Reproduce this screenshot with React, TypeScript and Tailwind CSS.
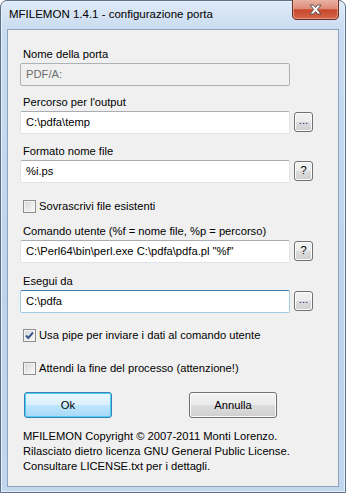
import React from "react";

function SmallBtn({ label }: { label: string }) {
  return (
    <div className="mt-[1px] flex h-[20px] w-[19px] items-center justify-center rounded-[3px] border border-[#707070] bg-[linear-gradient(180deg,#f2f2f2_0%,#ebebeb_50%,#dddddd_50%,#cfcfcf_100%)] text-[11.2px] leading-none text-black shadow-[inset_0_0_0_1px_#fcfcfc]">
      <span className={label === "?" ? "" : "-mt-[3px] text-[#1a1a6e]"}>{label}</span>
    </div>
  );
}

function TextBox({
  value,
  disabled,
  focused,
}: {
  value: string;
  disabled?: boolean;
  focused?: boolean;
}) {
  const cls = disabled
    ? "border-[#adb2b5] bg-[#f0f0f0] text-[#6d6d6d] rounded-[2px]"
    : focused
    ? "border-[#a4c9e3] border-t-[#3d7bad] bg-white text-black rounded-[2px]"
    : "border-[#dfe2e8] border-t-[#abadb3] bg-white text-black rounded-[2px]";
  return (
    <div
      className={
        "flex h-[23px] w-[270px] items-center border pl-[5px] text-[11.2px] leading-none " +
        cls
      }
    >
      {value}
    </div>
  );
}

function Label({ text, mt }: { text: string; mt: string }) {
  return <div className={"h-[16px] pl-[3px] text-[11.2px] leading-[16px] " + mt}>{text}</div>;
}

function CheckBox({ checked, text, mt }: { checked?: boolean; text: string; mt: string }) {
  return (
    <div className={"flex h-[16px] items-center pl-[3px] " + mt}>
      <div className="flex h-[13px] w-[13px] items-center justify-center border border-[#8e8f8f] bg-[linear-gradient(135deg,#d2d4d8_0%,#eeeeee_60%,#f7f7f7_100%)] shadow-[inset_0_0_0_1px_#f4f4f4]">
        {checked && (
          <svg width="11" height="11" viewBox="0 0 11 11">
            <path d="M2 5.5 L4.3 8 L9 2.5" fill="none" stroke="#3c5a8a" strokeWidth="2" />
          </svg>
        )}
      </div>
      <span className="ml-[3px] text-[11.2px] leading-[16px]">{text}</span>
    </div>
  );
}

export default function App() {
  return (
    <div className="relative h-[493px] w-[346px] overflow-hidden font-['Liberation_Sans',Arial,sans-serif] text-black">
      <div className="absolute inset-0 rounded-t-[7px] border border-[#5b6f86] bg-[linear-gradient(180deg,#dfeaf7_0%,#c9dcf1_6%,#bed4ed_60%,#c2d7ee_100%)] shadow-[inset_0_0_0_1px_#e8f1fb]">
        {/* title bar */}
        <div className="flex h-[28px] items-center pl-[8px] text-[11.5px] leading-none text-black">
          MFILEMON 1.4.1 - configurazione porta
        </div>
        {/* close button */}
        <div className="absolute left-[291px] top-[-1px]">
          <svg width="47" height="20" viewBox="0 0 47 20">
            <defs>
              <linearGradient id="cg" x1="0" y1="0" x2="0" y2="1">
                <stop offset="0" stopColor="#eab1a3" />
                <stop offset="0.45" stopColor="#dd8a75" />
                <stop offset="0.5" stopColor="#c9482c" />
                <stop offset="1" stopColor="#d4664a" />
              </linearGradient>
            </defs>
            <path d="M0.5 0 V15 Q0.5 19.5 5 19.5 H42 Q46.5 19.5 46.5 15 V0" fill="url(#cg)" stroke="#6a2e22" />
            <path d="M1.5 0 V15 Q1.5 18.5 5 18.5 H42 Q45.5 18.5 45.5 15 V0" fill="none" stroke="#f1b9a8" strokeOpacity="0.6" />
            <path
              d="M18 5 H21.5 L23.5 7.5 L25.5 5 H29 L25.3 9.5 L29 14 H25.5 L23.5 11.5 L21.5 14 H18 L21.7 9.5 Z"
              fill="#ffffff"
              stroke="#4b4b4b"
              strokeWidth="0.9"
              strokeLinejoin="round"
            />
          </svg>
        </div>
        {/* client area */}
        <div className="absolute left-[6px] top-[28px] h-[458px] w-[332px] border border-[#8da2bb] bg-[#f0f0f0]">
          <div className="flex flex-col pl-[12px] pt-[16px]">
            <Label text="Nome della porta" mt="" />
            <div className="mt-[1px]">
              <TextBox value="PDF/A:" disabled />
            </div>

            <Label text="Percorso per l'output" mt="mt-[8px]" />
            <div className="mt-[1px] flex items-start gap-[4px]">
              <TextBox value="C:\pdfa\temp" />
              <SmallBtn label="..." />
            </div>

            <Label text="Formato nome file" mt="mt-[9px]" />
            <div className="mt-[1px] flex items-start gap-[4px]">
              <TextBox value="%i.ps" />
              <SmallBtn label="?" />
            </div>

            <CheckBox text="Sovrascrivi file esistenti" mt="mt-[15px]" />

            <Label text="Comando utente (%f = nome file, %p = percorso)" mt="mt-[9px]" />
            <div className="mt-[1px] flex items-start gap-[4px]">
              <TextBox value={'C:\\Perl64\\bin\\perl.exe C:\\pdfa\\pdfa.pl "%f"'} />
              <SmallBtn label="?" />
            </div>

            <Label text="Esegui da" mt="mt-[10px]" />
            <div className="mt-[1px] flex items-start gap-[4px]">
              <TextBox value="C:\pdfa" focused />
              <SmallBtn label="..." />
            </div>

            <CheckBox checked text="Usa pipe per inviare i dati al comando utente" mt="mt-[14px]" />
            <CheckBox text="Attendi la fine del processo (attenzione!)" mt="mt-[17px]" />

            <div className="ml-[4px] mt-[16px] flex gap-[77px]">
              <div className="flex h-[26px] w-[88px] items-center justify-center rounded-[3px] border border-[#3c7fb1] bg-[linear-gradient(180deg,#eaf6fd_0%,#d9f0fc_50%,#bee6fd_50%,#a7d9f5_100%)] text-[11.2px] shadow-[inset_0_0_0_1px_#48d0f6]">
                Ok
              </div>
              <div className="flex h-[26px] w-[88px] items-center justify-center rounded-[3px] border border-[#707070] bg-[linear-gradient(180deg,#f2f2f2_0%,#ebebeb_50%,#dddddd_50%,#cfcfcf_100%)] text-[11.2px] shadow-[inset_0_0_0_1px_#fcfcfc]">
                Annulla
              </div>
            </div>

            <div className="mt-[11px] pl-[3px] text-[11.2px] leading-[15px]">
              <div>MFILEMON Copyright © 2007-2011 Monti Lorenzo.</div>
              <div>Rilasciato dietro licenza GNU General Public License.</div>
              <div>Consultare LICENSE.txt per i dettagli.</div>
            </div>
          </div>
        </div>
      </div>
    </div>
  );
}
